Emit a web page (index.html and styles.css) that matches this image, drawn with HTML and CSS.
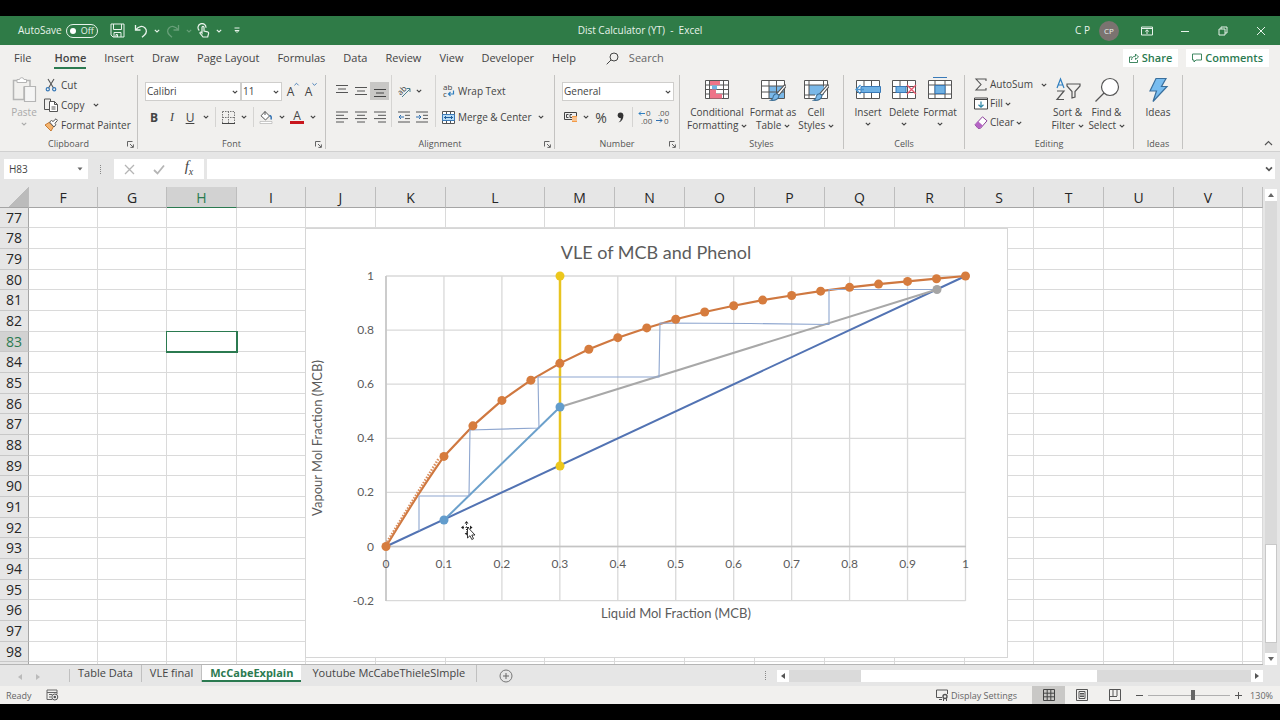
FILE: index.html
```html
<!DOCTYPE html>
<html lang="en">
<head>
  <title>Dist Calculator (YT) - Excel</title>
  <meta charset="utf-8">
  <meta name="viewport" content="width=device-width, initial-scale=1">
  <link rel="stylesheet" href="styles.css">
</head>
<body>
  <svg class="sprite" aria-hidden="true">
    <symbol id="chevron" viewBox="0 0 6 6"><path d="M.8 1.8 3 4 5.2 1.8" fill="none" stroke="currentColor" stroke-width="1.1"/></symbol>
    <symbol id="launcher" viewBox="0 0 7 7"><path d="M.5 5.5v-5h5M3 3l3 3M6.4 3.4v3h-3" fill="none" stroke="currentColor" stroke-width=".9"/></symbol>
    <symbol id="brush" viewBox="0 0 16 16"><path d="M14.5.8c.8.5.8 1.2.2 2L8.8 10 7 8.5 13 1.6c.5-.6 1-.9 1.5-.8z" fill="#fff" stroke="#555" stroke-width=".9"/><path d="M6.8 8.6 8.8 10c.2 3-2.600 5-7.300 4.500 2.300-1 1.800-2.300 2.500-4 .6-1.300 1.600-1.900 2.800-1.900z" fill="#7ab8e8" stroke="#3f6f94" stroke-width=".9"/></symbol>
  </svg>

  <div class="app">
    <header class="titlebar">
      <label class="autosave">AutoSave
        <input type="checkbox" role="switch">
        <span class="toggle">Off</span>
      </label>
      <div class="quick">
        <button aria-label="Save"><svg width="15" height="15" viewBox="0 0 15 15"><path d="M1 1h13v13H3l-2-2zM3.500 1v5.500h8V1M4 14V9.500h7V14M6 14v-2.500h1.500V14" fill="none" stroke="currentColor"/></svg></button>
        <button aria-label="Undo"><svg width="14" height="14" viewBox="0 0 14 14"><path d="M1.500 1v5h5M1.700 6C4.500 2 8.500 1.600 10.800 3.800s2 5-.3 7.200L8 13.300" fill="none" stroke="currentColor" stroke-width="1.300"/></svg></button>
        <button class="more" aria-label="Undo list"><svg width="6" height="6"><use href="#chevron"/></svg></button>
        <button class="dim" aria-label="Redo"><svg width="14" height="14" viewBox="0 0 14 14"><path d="M12.500 1v5h-5M12.300 6C9.500 2 5.500 1.600 3.200 3.800s-2 5 .3 7.200L6 13.300" fill="none" stroke="currentColor" stroke-width="1.300"/></svg></button>
        <button class="more dim" aria-label="Redo list"><svg width="6" height="6"><use href="#chevron"/></svg></button>
        <button class="touch" aria-label="Touch mode"><svg width="13" height="15" viewBox="0 0 13 15"><path d="M2.300 7.500A4 4 0 1 1 9 4.800M5 10V4.500c0-1.500 2-1.500 2 0V8l3.500.8c1 .3 1.300 1 1 2l-.8 3.200H6l-3-3.800c-.3-1 .8-1.500 1.500-.8z" fill="none" stroke="currentColor" stroke-width="1.200"/></svg></button>
        <button class="more" aria-label="Touch list"><svg width="6" height="6"><use href="#chevron"/></svg></button>
        <button class="more last" aria-label="Customize toolbar"><svg width="6" height="7" viewBox="0 0 6 7"><path d="M.5 1h5M1 3.500l2 2 2-2z" fill="none" stroke="currentColor"/></svg></button>
      </div>
      <div class="doc-title">Dist Calculator (YT)&nbsp; -&nbsp; Excel</div>
      <div class="window-side">
        <span>C P</span>
        <button class="avatar" aria-label="Account">CP</button>
        <button class="win" aria-label="Ribbon display"><svg width="12" height="10" viewBox="0 0 12 10"><path d="M.5 1h11v8H.5zM.5 2.500h11M6 8V4M4.200 5.500 6 3.800l1.800 1.700" fill="none" stroke="currentColor"/></svg></button>
        <button class="win" aria-label="Minimize"><svg width="10" height="10" viewBox="0 0 10 10"><path d="M1 5.500h8" stroke="currentColor"/></svg></button>
        <button class="win" aria-label="Restore"><svg width="10" height="10" viewBox="0 0 10 10"><path d="M1 3h6v6H1zM3 3V1h6v6H7" fill="none" stroke="currentColor"/></svg></button>
        <button class="win" aria-label="Close"><svg width="10" height="10" viewBox="0 0 10 10"><path d="m1 1 8 8M9 1 1 9" stroke="currentColor"/></svg></button>
      </div>
    </header>

    <nav class="tabs">
      <a href="#">File</a>
      <a href="#" class="current">Home</a>
      <a href="#">Insert</a>
      <a href="#">Draw</a>
      <a href="#">Page Layout</a>
      <a href="#">Formulas</a>
      <a href="#">Data</a>
      <a href="#">Review</a>
      <a href="#">View</a>
      <a href="#">Developer</a>
      <a href="#">Help</a>
      <label class="search">
        <svg width="13" height="13" viewBox="0 0 13 13"><circle cx="8" cy="5" r="4" fill="none" stroke="currentColor"/><path d="M5 8 .7 12.300" stroke="currentColor"/></svg>
        <input type="text" placeholder="Search" aria-label="Search">
      </label>
      <button class="share"><svg width="10" height="10" viewBox="0 0 10 10"><path d="M3 4H.5v5.500h8V7M2.500 7c.3-2.500 1.500-3.700 4-3.800V1L9.500 4 6.500 6.500V4.800" fill="none" stroke="currentColor" stroke-width=".9"/></svg>Share</button>
      <button class="share"><svg width="10" height="10" viewBox="0 0 10 10"><path d="M.5 1h9v6H4L2 9V7H.5z" fill="none" stroke="currentColor" stroke-width=".9"/></svg>Comments</button>
    </nav>

    <div class="ribbon">
      <section class="group clipboard">
        <div class="group-body">
          <button class="big paste" disabled>
            <svg width="25" height="26" viewBox="0 0 25 26"><path d="M5 3.500H1.500v19H12M12 22.500v-13M18 9V3.500h-3.500" fill="none" stroke="#b5b5b5" stroke-width="1.500"/><path d="M5 5.500v-3h2.500a2.300 2.300 0 0 1 4.500 0h2.500v3z" fill="#fff" stroke="#b5b5b5"/><path d="M12.500 9.500h11v15h-11z" fill="#f5f5f5" stroke="#b5b5b5" stroke-width="1.200"/></svg>
            Paste
            <svg width="6" height="6"><use href="#chevron"/></svg>
          </button>
          <div class="list">
            <button><svg width="14" height="14" viewBox="0 0 14 14"><path d="m4 1 5.500 9M10 1 4.500 10" stroke="#555" stroke-width="1.100"/><g fill="none" stroke="#3a7ab8" stroke-width="1.200"><circle cx="3.800" cy="11.200" r="1.600"/><circle cx="10.200" cy="11.200" r="1.600"/></g></svg>Cut</button>
            <button><svg width="14" height="14" viewBox="0 0 14 14"><path d="M5 11.500H.5V1h6v2" fill="none" stroke="#555"/><path d="M5.500 3.500h5l3 3v7h-8zM10.500 3.500v3h3M7.500 9h4M7.500 11h4" fill="#fff" stroke="#555"/></svg>Copy <svg class="gap" width="6" height="6"><use href="#chevron"/></svg></button>
            <button><svg width="14" height="14" viewBox="0 0 14 14"><path d="m1 7 4-2.500 4.500 4L7 13z" fill="#f5b570" stroke="#c77b33"/><path d="m5.500 4 2-1.500 1.500 1L12 .8l1.500 1.500-2.500 3 .8 1.500L10 9z" fill="#fff" stroke="#555"/></svg>Format Painter</button>
          </div>
        </div>
        <footer>Clipboard<button class="launch" aria-label="Clipboard options"><svg width="7" height="7"><use href="#launcher"/></svg></button></footer>
      </section>

      <section class="group font">
        <div class="group-body rows">
          <div class="row">
            <span class="combo font-name"><select aria-label="Font"><option>Calibri</option></select><svg width="6" height="6"><use href="#chevron"/></svg></span>
            <span class="combo font-size"><select aria-label="Font size"><option>11</option></select><svg width="6" height="6"><use href="#chevron"/></svg></span>
            <button class="tool grow" aria-label="Increase font size">A<svg width="5" height="5" viewBox="0 0 6 6"><path d="M.5 4 3 1.500 5.500 4" fill="none" stroke="#2f6fb0"/></svg></button>
            <button class="tool grow" aria-label="Decrease font size">A<svg width="5" height="5" viewBox="0 0 6 6"><path d="M.5 1.500 3 4l2.500-2.500" fill="none" stroke="#2f6fb0"/></svg></button>
          </div>
          <div class="row">
            <button class="tool bold">B</button>
            <button class="tool italic">I</button>
            <button class="tool underline">U</button>
            <button class="drop" aria-label="Underline styles"><svg width="6" height="6"><use href="#chevron"/></svg></button>
            <i class="sep"></i>
            <button class="tool" aria-label="Borders"><svg width="13" height="13" viewBox="0 0 13 13"><path d="M.5.5h12v12M.5.5v12M6.500.5v12M.5 6.500h12" fill="none" stroke="#777" stroke-dasharray="1.500 1"/><path d="M0 12.500h13" stroke="#444"/></svg></button>
            <button class="drop" aria-label="Border styles"><svg width="6" height="6"><use href="#chevron"/></svg></button>
            <i class="sep"></i>
            <button class="tool" aria-label="Fill colour"><svg width="14" height="14" viewBox="0 0 14 14"><path d="m6 1.500 4.500 4.500-4 4L2 5.800zM6 1.500V5" fill="#fff" stroke="#555"/><path d="M10.500 5.500c2 .5 2 2 1.500 4" fill="none" stroke="#2f6fb0" stroke-width="1.500"/><path d="M1 11.500h12v2H1z" fill="#fff" stroke="#aaa" stroke-width=".6"/></svg></button>
            <button class="drop" aria-label="Fill colours"><svg width="6" height="6"><use href="#chevron"/></svg></button>
            <button class="tool font-color">A</button>
            <button class="drop" aria-label="Font colours"><svg width="6" height="6"><use href="#chevron"/></svg></button>
          </div>
        </div>
        <footer>Font<button class="launch" aria-label="Font options"><svg width="7" height="7"><use href="#launcher"/></svg></button></footer>
      </section>

      <section class="group alignment">
        <div class="group-body">
          <div class="align-grid">
            <button class="tool" aria-label="Top align"><svg width="12" height="12" viewBox="0 0 12 12"><path d="M0 .5h12M2 4h8M0 7.500h12" stroke="#555"/></svg></button>
            <button class="tool" aria-label="Middle align"><svg width="12" height="12" viewBox="0 0 12 12"><path d="M0 2.500h12M2 6h8M0 9.500h12" stroke="#555"/></svg></button>
            <button class="tool pressed" aria-label="Bottom align"><svg width="12" height="12" viewBox="0 0 12 12"><path d="M0 4.500h12M2 8h8M0 11.500h12" stroke="#444"/></svg></button>
            <button class="tool" aria-label="Align left"><svg width="12" height="12" viewBox="0 0 12 12"><path d="M0 1h12M0 4.300h8M0 7.600h12M0 11h8" stroke="#555"/></svg></button>
            <button class="tool" aria-label="Center"><svg width="12" height="12" viewBox="0 0 12 12"><path d="M0 1h12M2 4.300h8M0 7.600h12M2 11h8" stroke="#555"/></svg></button>
            <button class="tool" aria-label="Align right"><svg width="12" height="12" viewBox="0 0 12 12"><path d="M0 1h12M4 4.300h8M0 7.600h12M4 11h8" stroke="#555"/></svg></button>
          </div>
          <div class="indent">
            <div class="row">
              <button class="tool" aria-label="Orientation"><svg width="15" height="14" viewBox="0 0 15 14"><text x="0" y="9" transform="rotate(-45 5 6)" font-size="8" fill="#444">ab</text><path d="m5 13 8-8M9.500 4.500H13V8" fill="none" stroke="#4a7f8f"/></svg></button>
              <button class="drop" aria-label="Orientation list"><svg width="6" height="6"><use href="#chevron"/></svg></button>
            </div>
            <div class="row">
              <button class="tool" aria-label="Decrease indent"><svg width="12" height="12" viewBox="0 0 12 12"><path d="M0 1h12M7 4.300h5M7 7.600h5M0 11h12" stroke="#555"/><path d="M6 6H1M3 4 1 6l2 2" fill="none" stroke="#2f6fb0"/></svg></button>
              <button class="tool" aria-label="Increase indent"><svg width="12" height="12" viewBox="0 0 12 12"><path d="M0 1h12M7 4.300h5M7 7.600h5M0 11h12" stroke="#555"/><path d="M0 6h5M3 4l2 2-2 2" fill="none" stroke="#2f6fb0"/></svg></button>
            </div>
          </div>
          <div class="wrap">
            <button class="text-tool"><svg width="13" height="14" viewBox="0 0 13 14"><text x="1" y="6" font-size="8" fill="#444">ab</text><text x="1" y="13" font-size="8" fill="#444">c</text><path d="M11.500 6.500v3.500H6.500M8.500 8l-2 2 2 2" fill="none" stroke="#2f7fc0" stroke-width="1.200"/></svg>Wrap Text</button>
            <button class="text-tool"><svg width="13" height="13" viewBox="0 0 13 13"><path d="M.5.5h12v12H.5z" fill="#fff" stroke="#555"/><path d="M4.500.5v3M8.500.5v3M4.500 9.500v3M8.500 9.500v3" stroke="#555"/><path d="M.5 3.500h12v6H.5z" fill="#b9dcf5" stroke="#3a7ab8"/><path d="M2 6.500h9M4 5 2.500 6.500 4 8M9 5l1.500 1.500L9 8" fill="none" stroke="#1f5f9f"/></svg>Merge &amp; Center <svg class="gap" width="6" height="6"><use href="#chevron"/></svg></button>
          </div>
        </div>
        <footer>Alignment<button class="launch" aria-label="Alignment options"><svg width="7" height="7"><use href="#launcher"/></svg></button></footer>
      </section>

      <section class="group number">
        <div class="group-body rows">
          <div class="row">
            <span class="combo format"><select aria-label="Number format"><option>General</option></select><svg width="6" height="6"><use href="#chevron"/></svg></span>
          </div>
          <div class="row">
            <button class="tool" aria-label="Accounting format"><svg width="14" height="12" viewBox="0 0 14 12"><path d="M.5 1.500h12v7H.5z" fill="#eee" stroke="#444"/><path d="M4.500 3.500H2.500v3h2M8 3.500H6v3h2" fill="none" stroke="#444"/><path d="M8 5h5v6H8z" fill="#f39b48"/><path d="M8 7h5M8 9h5" stroke="#fff" stroke-width=".8"/></svg></button>
            <button class="drop" aria-label="Accounting formats"><svg width="6" height="6"><use href="#chevron"/></svg></button>
            <button class="tool percent">%</button>
            <button class="tool comma" aria-label="Comma style"><svg width="7" height="11" viewBox="0 0 7 11"><circle cx="3.500" cy="3.300" r="2.800" fill="#333"/><path d="M6.300 3.300C6.500 7 5 9.500 1.500 10.500c2-1.500 2.700-3 2-5.500z" fill="#333"/></svg></button>
            <i class="sep"></i>
            <button class="tool" aria-label="Increase decimal"><svg width="14" height="14" viewBox="0 0 14 14"><text x="8" y="6" font-size="8" fill="#555">0</text><text x="3" y="14" font-size="8" fill="#555">.00</text><path d="M7 3.500H1M3 1.500l-2 2 2 2" fill="none" stroke="#2f7fc0"/></svg></button>
            <button class="tool" aria-label="Decrease decimal"><svg width="14" height="14" viewBox="0 0 14 14"><text x="2" y="6" font-size="8" fill="#555">.00</text><text x="8" y="14" font-size="8" fill="#555">0</text><path d="M0 10.500h6M4 8.500l2 2-2 2" fill="none" stroke="#2f6fb0"/></svg></button>
          </div>
        </div>
        <footer>Number<button class="launch" aria-label="Number options"><svg width="7" height="7"><use href="#launcher"/></svg></button></footer>
      </section>

      <section class="group styles">
        <div class="group-body">
          <button class="big wide"><svg width="26" height="26" viewBox="0 0 26 26"><path d="M1.500 3.500h23v18h-23zM1.500 8h23M1.500 12.500h23M1.500 17h23M5.500 3.500v18M19.500 3.500v18" fill="#fff" stroke="#555"/><path d="M6 4h10v4H6zM6 17h12v4.500H6z" fill="#ee7489"/><path d="M8 8.500h5v4H8z" fill="#6fb1e4"/><path d="M6 12.500h6V17H6z" fill="#ee7489"/></svg>Conditional<span>Formatting <svg width="6" height="6"><use href="#chevron"/></svg></span></button>
          <button class="big"><svg width="26" height="26" viewBox="0 0 26 26"><path d="M1.500 3.500h23v18h-23z" fill="#fff"/><path d="M9 9h15v12H9z" fill="#7ab8e8"/><path d="M1.500 3.500h23v18h-23zM1.500 9h23M1.500 15h23M9 3.500v18M16.500 3.500v18" fill="none" stroke="#555"/><use href="#brush" x="9" y="7" width="18" height="18"/></svg>Format as<span>Table <svg width="6" height="6"><use href="#chevron"/></svg></span></button>
          <button class="big narrow"><svg width="26" height="26" viewBox="0 0 26 26"><path d="M1.500 3.500h23v18h-23z" fill="#fff"/><path d="M6 8h15v10H6z" fill="#7ab8e8"/><path d="M1.500 3.500h23v18h-23zM1.500 8h23M6 3.500v18M1.500 18H12M20.500 3.500v6" fill="none" stroke="#555"/><use href="#brush" x="9" y="7" width="18" height="18"/></svg>Cell<span>Styles <svg width="6" height="6"><use href="#chevron"/></svg></span></button>
        </div>
        <footer>Styles</footer>
      </section>

      <section class="group cells">
        <div class="group-body">
          <button class="big"><svg width="26" height="26" viewBox="0 0 26 26"><path d="M1.500 3.500h23v18h-23zM1.500 15.500h23M9 3.500v18M16.500 3.500v18" fill="#fff" stroke="#555"/><path d="M6 9.500h19.500v6H6z" fill="#6fb1e4" stroke="#3a7ab8"/><path d="M9 12.500H1M5.500 8 1 12.500 5.500 17" fill="none" stroke="#4a94d0" stroke-width="1.300"/></svg>Insert<svg width="6" height="6"><use href="#chevron"/></svg></button>
          <button class="big"><svg width="26" height="26" viewBox="0 0 26 26"><path d="M1.500 3.500h23v18h-23zM1.500 9.500h23M1.500 15.500h23M9 3.500v18M16.500 3.500v18" fill="#fff" stroke="#555"/><path d="M5 9.500h10v6H5z" fill="#6fb1e4" stroke="#3a7ab8"/><path d="m16 8 9 9M25 8l-9 9" stroke="#e8566c" stroke-width="1.300"/></svg>Delete<svg width="6" height="6"><use href="#chevron"/></svg></button>
          <button class="big"><svg width="26" height="26" viewBox="0 0 26 26"><path d="M1.500 3.500h23v18h-23zM1.500 8h23M1.500 17h23M8 3.500v18M18 3.500v18" fill="#fff" stroke="#555"/><path d="M8 8.500h10v8H8z" fill="#6fb1e4" stroke="#3a7ab8"/><path d="M6 .5h14" stroke="#3a7ab8"/></svg>Format<svg width="6" height="6"><use href="#chevron"/></svg></button>
        </div>
        <footer>Cells</footer>
      </section>

      <section class="group editing">
        <div class="group-body">
          <div class="list">
            <button><svg width="14" height="13" viewBox="0 0 14 13"><path d="M12 3V1H2l5 5.500L2 12h10v-2" fill="none" stroke="#555" stroke-width="1.100"/></svg>AutoSum <svg class="gap" width="6" height="6"><use href="#chevron"/></svg></button>
            <button><svg width="14" height="13" viewBox="0 0 14 13"><path d="M.5 1h13v11H.5z" fill="#fff" stroke="#444"/><path d="M.5 2.500h13" stroke="#444"/><path d="M7 4.500V10M4.500 7.800 7 10.200l2.500-2.400" fill="none" stroke="#2c85a5" stroke-width="1.200"/></svg>Fill <svg width="6" height="6"><use href="#chevron"/></svg></button>
            <button><svg width="14" height="13" viewBox="0 0 14 13"><path d="m8.500.8 4.500 4-6.500 7.500H4L1 8.800z" fill="#fff" stroke="#8a3f98"/><path d="M4 5.300 8.800 9.500 6.300 12H4L1 8.800z" fill="#b565c4"/></svg>Clear <svg width="6" height="6"><use href="#chevron"/></svg></button>
          </div>
          <button class="big"><svg width="26" height="26" viewBox="0 0 26 26"><path d="m2 11 3.500-9L9 11M3.300 8h4.400" fill="none" stroke="#2f7fc0" stroke-width="1.200"/><path d="M2 14h7l-7 8.500h7M12 7h13v2l-5 5.500V20l-3 1v-6.500L12 9z" fill="none" stroke="#555" stroke-width="1.200"/></svg>Sort &amp;<span>Filter <svg width="6" height="6"><use href="#chevron"/></svg></span></button>
          <button class="big"><svg width="26" height="26" viewBox="0 0 26 26"><circle cx="16" cy="10" r="8.500" fill="#fff" stroke="#555" stroke-width="1.200"/><path d="m10 16-8.500 8.500" stroke="#555" stroke-width="1.300"/></svg>Find &amp;<span>Select <svg width="6" height="6"><use href="#chevron"/></svg></span></button>
        </div>
        <footer>Editing</footer>
      </section>

      <section class="group ideas">
        <div class="group-body">
          <button class="big"><svg width="26" height="26" viewBox="0 0 26 26"><path d="M11 1.500h10l-4.500 8h5.500L8 24.500 11.500 14H5z" fill="#78bdf0" stroke="#3a6f9c" stroke-width="1.200"/></svg>Ideas</button>
        </div>
        <footer>Ideas</footer>
      </section>
      <button class="collapse" aria-label="Collapse ribbon"><svg width="9" height="6" viewBox="0 0 9 6"><path d="m1 5 3.500-3.500L8 5" fill="none" stroke="#555" stroke-width="1.200"/></svg></button>
    </div>

    <div class="formula-bar">
      <span class="name-box"><input type="text" value="H83" aria-label="Name box"><svg width="6" height="4" viewBox="0 0 6 4"><path d="M.5.5h5L3 3.500z" fill="#666"/></svg></span>
      <span class="dots"></span>
      <div class="entry">
        <button aria-label="Cancel"><svg width="11" height="11" viewBox="0 0 11 11"><path d="m1 1 9 9M10 1l-9 9" stroke="#b5b5b5" stroke-width="1.300"/></svg></button>
        <button aria-label="Enter"><svg width="12" height="11" viewBox="0 0 12 11"><path d="m1 6 3.500 3.500L11 1.500" fill="none" stroke="#b5b5b5" stroke-width="1.800"/></svg></button>
        <button class="fx"><i>f</i><sub>x</sub></button>
      </div>
      <div class="formula">
        <input type="text" aria-label="Formula">
        <svg width="8" height="8" viewBox="0 0 6 6"><path d="M.8 1.800 3 4l2.200-2.200" fill="none" stroke="#555" stroke-width="1.300"/></svg>
      </div>
    </div>

    <main class="sheet">
      <div class="grid">
        <table>
          <colgroup id="cols"></colgroup>
          <thead><tr id="head"></tr></thead>
          <tbody id="cells"></tbody>
        </table>

        <svg class="chart" viewBox="0 0 703 430" role="img" aria-label="VLE of MCB and Phenol">
          <rect x=".5" y=".5" width="702" height="429" fill="#fff" stroke="#d6d6d6"/>
          <text class="chart-title" x="351" y="31">VLE of MCB and Phenol</text>
          <path id="gridlines" stroke="#d9d9d9" stroke-width="1.300"/>
          <path d="M81 318.500h580M81 48v325" stroke="#c4c4c4" stroke-width="1.500"/>
          <g id="labels"></g>
          <text class="axis-title" x="371" y="390">Liquid Mol Fraction (MCB)</text>
          <text class="axis-title" transform="translate(17 210) rotate(-90)">Vapour Mol Fraction (MCB)</text>
          <path d="M81 318.500 660.500 48" stroke="#5273b3" stroke-width="2"/>
          <path d="M255 179 632 61.500" stroke="#a8a8a8" stroke-width="2"/>
          <path d="m139 292 116-113" stroke="#6ba0cb" stroke-width="2"/>
          <path d="M255 48v190" stroke="#e8c420" stroke-width="2.500"/>
          <path id="curve" fill="none" stroke="#cf7840" stroke-width="2.200"/>
          <path d="M82 314 134 230" stroke="#d98d5c" stroke-width="2.500" stroke-dasharray="1.500 1.500"/>
          <path d="M114 303v-35h50l1-66 69-2-1-51h121l1-54 90 .5 79 1V61.500h107" fill="none" stroke="#8ea6cf" stroke-width="1.100"/>
          <g id="points" fill="#d67c3e"></g>
          <circle cx="632" cy="61.500" r="4.500" fill="#a5a5a5"/>
          <g fill="#629ccc"><circle cx="255" cy="179" r="4.500"/><circle cx="139" cy="292" r="4.500"/></g>
          <g fill="#ecc71c"><circle cx="255" cy="48" r="4.500"/><circle cx="255" cy="238" r="4.500"/></g>
          <!-- move pointer -->
          <g transform="translate(155 292)">
            <path d="M6.500 4v10M3 7.500h8" stroke="#222" stroke-dasharray="1 1.500"/>
            <path d="m6.500 1 2 2.500h-4zM1 7.500 3.500 5.500v4zM12.500 7.500 10 5.500v4zM6.500 15.500l-1.800-2.500h2.500z" fill="#222"/>
            <path d="M7.500 7v11l2.500-2.300 1.800 3.800 1.700-.8-1.700-3.700h3.200z" fill="#fff" stroke="#222" stroke-width=".9"/>
          </g>
        </svg>
      </div>
      <div class="scroll vertical">
        <button aria-label="Scroll up"><svg width="6" height="4" viewBox="0 0 6 4"><path d="M0 4h6L3 0z" fill="#666"/></svg></button>
        <div class="track"><div class="thumb"></div></div>
        <button aria-label="Scroll down"><svg width="6" height="4" viewBox="0 0 6 4"><path d="M0 0h6L3 4z" fill="#666"/></svg></button>
      </div>
    </main>

    <div class="sheet-tabs">
      <div class="sheet-nav">
        <button aria-label="Previous sheet"><svg width="4" height="6" viewBox="0 0 4 6"><path d="M4 0v6L0 3z" fill="#bbb"/></svg></button>
        <button aria-label="Next sheet"><svg width="4" height="6" viewBox="0 0 4 6"><path d="M0 0v6l4-3z" fill="#bbb"/></svg></button>
      </div>
      <a href="#">Table Data</a>
      <a href="#">VLE final</a>
      <a href="#" class="current">McCabeExplain</a>
      <a href="#">Youtube McCabeThieleSImple</a>
      <button class="add" aria-label="New sheet"><svg width="14" height="14" viewBox="0 0 14 14"><circle cx="7" cy="7" r="6" fill="none" stroke="#777"/><path d="M7 4v6M4 7h6" stroke="#666"/></svg></button>
      <span class="dots"></span>
      <div class="scroll horizontal">
        <button aria-label="Scroll left"><svg width="4" height="6" viewBox="0 0 4 6"><path d="M4 0v6L0 3z" fill="#555"/></svg></button>
        <div class="track"><div class="thumb"></div></div>
        <button aria-label="Scroll right"><svg width="4" height="6" viewBox="0 0 4 6"><path d="M0 0v6l4-3z" fill="#555"/></svg></button>
      </div>
    </div>

    <footer class="status">
      <span class="ready">Ready</span>
      <button aria-label="Record macro"><svg width="13" height="12" viewBox="0 0 13 12"><path d="M6 10.500H1V1h10v4M1 3.500h10M3 5.500h3M3 8h2" fill="none" stroke="#666"/><circle cx="8.800" cy="8" r="3" fill="#f1f1f1" stroke="#555"/><circle cx="8.800" cy="8" r="1.300" fill="#555"/></svg></button>
      <button class="display"><svg width="13" height="12" viewBox="0 0 13 12"><path d="M6 8.500H.5V1h11v4M3 10.500h3" fill="none" stroke="#555"/><circle cx="9" cy="7.500" r="2" fill="none" stroke="#555" stroke-width="1.400"/><path d="M7.500 9.500v2.500M10.500 9.500v2.500" stroke="#555"/></svg>Display Settings</button>
      <button class="view on" aria-label="Normal view"><svg width="12" height="12" viewBox="0 0 12 12"><path d="M.5.5h11v11H.5zM.5 4.200h11M.5 7.800h11M4.200.5v11M7.800.5v11" fill="none" stroke="#444"/></svg></button>
      <button class="view" aria-label="Page layout view"><svg width="12" height="12" viewBox="0 0 12 12"><path d="M.5.5h11v11H.5zM3 2.500h6v7H3zM4 4.500h4M4 6h4M4 7.500h4" fill="none" stroke="#555"/></svg></button>
      <button class="view" aria-label="Page break view"><svg width="12" height="12" viewBox="0 0 12 12"><path d="M.5.5h11v11H.5zM4 1v6M8 1v6M.5 7.500H8" fill="none" stroke="#555"/></svg></button>
      <button class="zoom" aria-label="Zoom out"><svg width="7" height="7" viewBox="0 0 7 7"><path d="M0 3.500h7" stroke="#555"/></svg></button>
      <input type="range" min="0" max="100" value="55" aria-label="Zoom">
      <button class="zoom" aria-label="Zoom in"><svg width="7" height="7" viewBox="0 0 7 7"><path d="M0 3.500h7M3.500 0v7" stroke="#555"/></svg></button>
      <span class="percent-label">130%</span>
    </footer>
  </div>

  <script>
    const widths = { F: 69, G: 69, H: 70, I: 69, J: 70, K: 70, L: 99, M: 70, N: 70, O: 70, P: 70, Q: 70, R: 70, S: 69, T: 70, U: 70, V: 69, '': 'auto' }
    const names = Object.keys(widths)
    const cols = document.getElementById('cols')
    const head = document.getElementById('head')
    const cells = document.getElementById('cells')

    cols.innerHTML = '<col class="row-col">' + names.map(n => `<col${n ? ` style="width: ${widths[n]}px"` : ''}>`).join('')
    head.innerHTML = '<td class="corner"></td>' + names.map(n => `<th${n === 'H' ? ' class="on"' : ''}>${n}</th>`).join('')

    for (let row = 77; row <= 99; row++) {
      const tds = names.map(n => n + row === 'H83' ? '<td class="selected"></td>' : '<td></td>').join('')
      cells.innerHTML += `<tr><th${row === 83 ? ' class="on"' : ''}>${row < 99 ? row : ''}</th>${tds}</tr>`
    }

    // chart scale, mol fraction to chart units
    const px = x => 81 + x * 579.5
    const py = y => 318.5 - y * 270.5
    const vapour = [0, 0.333, 0.446, 0.54, 0.615, 0.677, 0.729, 0.772, 0.808, 0.84, 0.867, 0.89, 0.911, 0.928, 0.944, 0.958, 0.97, 0.98, 0.99, 1]
    const points = vapour.map((y, i) => [px(i ? (i + 1) * 0.05 : 0), py(y)])

    let lines = ''
    let labels = ''
    for (let i = 0; i <= 10; i++) {
      lines += `M${px(i / 10)} 48V373`
      labels += `<text class="axis" x="${px(i / 10)}" y="340">${i / 10}</text>`
    }
    for (let i = -1; i <= 5; i++) {
      lines += `M81 ${py(i / 5)}H660.5`
      labels += `<text class="axis end" x="69" y="${py(i / 5) + 4}">${i / 5}</text>`
    }
    document.getElementById('gridlines').setAttribute('d', lines)
    document.getElementById('labels').innerHTML = labels
    document.getElementById('curve').setAttribute('d', 'M81 318.5Q112 267 ' + points.slice(1).map(p => p.join(' ')).join('L'))
    document.getElementById('points').innerHTML = points.map(p => `<circle cx="${p[0]}" cy="${p[1]}" r="4.5"/>`).join('')
  </script>
</body>
</html>
```
FILE: styles.css
```css
* {
  box-sizing: border-box;
  margin: 0;
}

body {
  height: 100vh;
  padding: 16px 0;
  background-color: #000000;
  color: #444444;
  font-family: "Open Sans", "Noto Sans", sans-serif;
  font-size: 10px;
  line-height: 13px;
}

button, input, select {
  padding: 0;
  border: 0;
  background: none;
  color: inherit;
  font: inherit;
}

a {
  color: inherit;
  text-decoration: none;
}

svg {
  flex: none;
}

.sprite {
  position: absolute;
  width: 0;
  height: 0;
}

.app {
  display: flex;
  flex-direction: column;
  height: 100%;
  background-color: #E6E6E6;
}

/* title bar */

.titlebar {
  display: grid;
  grid-template-columns: 1fr auto 1fr;
  grid-template-areas: "left title right";
  align-items: center;
  height: 29px;
  background-color: #2F7B47;
  color: #E8F3EB;
}

.titlebar button {
  display: flex;
  align-items: center;
  justify-content: center;
}

.autosave {
  display: flex;
  grid-area: left;
  gap: 4px;
  align-items: center;
  padding-left: 18px;
}

.autosave input {
  position: absolute;
  opacity: 0;
}

.toggle {
  display: flex;
  gap: 5px;
  align-items: center;
  height: 14px;
  padding: 0 3px;
  border: 1px solid #E8F3EB;
  border-radius: 7px;
  font-size: 9px;
}

.toggle::before {
  width: 6px;
  height: 6px;
  border-radius: 50%;
  background-color: #FFFFFF;
  content: "";
}

.quick {
  display: flex;
  grid-area: left;
  align-items: center;
  padding-left: 107px;
}

.quick button {
  width: 20px;
}

.quick .more {
  width: 12px;
}

.quick button:nth-child(2) {
  margin-left: 4px;
}

.quick .touch {
  margin-left: -2px;
}

.quick .last {
  margin-left: 6px;
}

.dim {
  opacity: 0.3;
}

.doc-title {
  grid-area: title;
}

.window-side {
  display: flex;
  grid-area: right;
  align-items: center;
  justify-content: flex-end;
}

.window-side .avatar {
  width: 20px;
  height: 20px;
  margin: 0 9px;
  border-radius: 50%;
  background-color: #7B7370;
  font-size: 8px;
}

.window-side .win {
  width: 38px;
}

/* ribbon tabs */

.tabs {
  display: flex;
  gap: 18px;
  align-items: center;
  height: 26px;
  padding: 0 11px 0 14px;
  background-color: #F1F0EE;
  font-size: 11px;
  line-height: 16px;
}

.tabs .current {
  margin-left: 5px;
  padding: 3px 0 1px;
  border-bottom: 2px solid #2B7A50;
  font-weight: 600;
}

.search {
  display: flex;
  flex: 1;
  gap: 10px;
  align-items: center;
  padding-left: 12px;
}

.search input {
  width: 80px;
}

.search input::placeholder {
  color: #666666;
  opacity: 1;
}

.share {
  display: flex;
  gap: 3px;
  align-items: center;
  height: 18px;
  margin-left: -10px;
  padding: 0 6px;
  background-color: #FFFFFF;
  color: #2B7A50;
  font-weight: 600;
}

/* ribbon */

.ribbon {
  display: flex;
  padding: 4px 0 2px;
  border-bottom: 1px solid #D0D0D0;
  background-color: #F1F0EE;
}

.group {
  display: flex;
  flex-direction: column;
  height: 74px;
  border-right: 1px solid #C4C3C1;
}

.group-body {
  display: flex;
  height: 64px;
}

.group footer {
  position: relative;
  color: #555555;
  font-size: 9px;
  line-height: 10px;
  text-align: center;
}

.launch {
  position: absolute;
  top: 2px;
  right: 3px;
  line-height: 0;
}

.clipboard { width: 138px; }
.font { width: 188px; }
.alignment { width: 229px; }
.number { width: 125px; }
.styles { width: 164px; }
.cells { width: 121px; }
.editing { width: 169px; }
.ideas { width: 49px; }

.big {
  display: flex;
  flex-direction: column;
  align-items: center;
  width: 50px;
  padding-top: 2px;
  white-space: nowrap;
}

.big > svg:first-child {
  margin-bottom: 3px;
}

.big > svg:last-child:not(:first-child) {
  margin-top: 2px;
}

.paste {
  width: 48px;
  color: #AAAAAA;
}

.styles .group-body,
.cells .group-body {
  padding-left: 6px;
}

.styles .wide {
  width: 62px;
}

.styles .narrow,
.cells .big {
  width: 36px;
}

.editing .big {
  width: 39px;
}

.ideas .big {
  width: 100%;
}

.list {
  display: flex;
  flex-direction: column;
  width: 89px;
}

.list button {
  display: flex;
  gap: 3px;
  align-items: center;
  height: 20px;
  white-space: nowrap;
}

.list .gap {
  margin-left: 6px;
}

.editing .list {
  width: 83px;
  padding-left: 9px;
}

.editing .list button {
  gap: 2px;
  height: 19px;
}

.clipboard .list {
  margin-left: -4px;
}

.rows {
  flex-direction: column;
  gap: 6px;
  padding: 6px 0 0 7px;
}

.row {
  display: flex;
  align-items: center;
  height: 20px;
}

.tool {
  display: flex;
  align-items: center;
  justify-content: center;
  width: 18px;
  height: 18px;
  font-size: 12px;
}

.tool svg,
.text-tool svg {
  overflow: visible;
}

.drop {
  display: flex;
  align-items: center;
  justify-content: center;
  width: 12px;
  height: 18px;
}

.font .drop {
  width: 13px;
}

.grow svg {
  align-self: flex-start;
}

.bold {
  font-weight: 700;
}

.italic {
  font-family: "Liberation Serif", serif;
  font-style: italic;
}

.underline {
  text-decoration: underline;
}

.font-color {
  width: 14px;
  height: 14px;
  margin: 0 2px;
  border-bottom: 3px solid #C8161D;
}

.percent {
  font-size: 14px;
}

.comma {
  margin-left: 1px;
}

.sep {
  width: 1px;
  height: 20px;
  margin: 0 3px;
  background-color: #D5D4D2;
}

.combo {
  position: relative;
  display: flex;
  height: 19px;
  border: 1px solid #CFCECC;
  background-color: #FFFFFF;
}

.combo select {
  width: 100%;
  padding-left: 1px;
  appearance: none;
}

.combo svg {
  position: absolute;
  top: 6px;
  right: 2px;
}

.font-name {
  width: 96px;
}

.font-size {
  width: 41px;
  margin-right: 2px;
}

.format {
  width: 112px;
}

.align-grid {
  display: grid;
  grid-template-columns: repeat(3, 19px);
  gap: 8px 0;
  align-content: start;
  padding: 7px 2px 0 6px;
}

.align-grid .tool {
  width: 19px;
}

.pressed {
  background-color: #C8C7C5;
}

.indent {
  display: flex;
  flex-direction: column;
  gap: 6px;
  width: 45px;
  height: 52px;
  padding: 6px 0 0 3px;
  border: solid #D5D4D2;
  border-width: 0 1px;
}

.wrap {
  display: flex;
  flex-direction: column;
  gap: 6px;
  padding: 6px 0 0 6px;
}

.text-tool {
  display: flex;
  gap: 3px;
  align-items: center;
  height: 20px;
  white-space: nowrap;
}

.text-tool .gap {
  margin-left: 3px;
}

.collapse {
  align-self: flex-end;
  margin: 0 7px 0 auto;
}

/* formula bar */

.formula-bar {
  display: flex;
  align-items: center;
  padding: 7px 5px 8px 4px;
}

.name-box,
.formula {
  display: flex;
  align-items: center;
  height: 20px;
  padding: 0 5px;
  background-color: #FFFFFF;
}

.name-box {
  width: 84px;
}

.name-box input {
  width: 68px;
}

.dots {
  width: 2px;
  height: 9px;
  border-left: 1px dotted #888888;
}

.formula-bar .dots {
  margin: 0 12px;
}

.entry {
  display: flex;
  height: 20px;
  margin-right: 3px;
  background-color: #FFFFFF;
}

.entry button {
  width: 30px;
  line-height: 0;
}

.entry .fx {
  font-family: "Liberation Serif", serif;
  font-size: 15px;
}

.fx sub {
  font-size: 10px;
  font-style: italic;
}

.formula {
  flex: 1;
  padding: 0 2px;
}

.formula input {
  flex: 1;
}

/* sheet */

.sheet {
  display: flex;
  flex: 1;
  min-height: 0;
}

.grid {
  position: relative;
  flex: 1;
  min-width: 0;
  overflow: hidden;
  border-bottom: 1px solid #B5B5B5;
}

table {
  width: 100%;
  border-collapse: separate;
  border-spacing: 0;
  table-layout: fixed;
  background-color: #FFFFFF;
}

.row-col {
  width: 29px;
}

th,
td {
  padding: 0;
  border-right: 1px solid #DADADA;
  border-bottom: 1px solid #DADADA;
}

th {
  background-color: #E6E6E6;
  color: #262626;
  font-size: 14px;
  font-weight: 400;
  line-height: 18px;
}

thead th,
.corner {
  height: 21px;
  padding-top: 2px;
  border-right-color: #BDBDBD;
  border-bottom-color: #A5A5A5;
}

.corner {
  background: linear-gradient(135deg, #E6E6E6 60%, #BBBBBB 60%);
}

tbody tr {
  height: 21px;
}

tbody tr:nth-child(3n + 1) {
  height: 20px;
}

tbody th {
  border-right-color: #A5A5A5;
  border-bottom-color: #C8C8C8;
}

th.on {
  background-color: #D2D2D2;
  color: #2B7A50;
}

thead .on {
  border-bottom-color: #2B7A50;
}

.selected {
  outline: 1px solid #2B7A50;
  border-color: #2B7A50;
}

.chart {
  position: absolute;
  top: 41px;
  left: 305px;
  width: 703px;
  height: 430px;
  font-family: "Lato", sans-serif;
}

.chart text {
  fill: #5C5C5C;
}

.chart .chart-title {
  font-size: 18px;
  text-anchor: middle;
}

.chart .axis {
  font-size: 12px;
  text-anchor: middle;
}

.chart .end {
  text-anchor: end;
}

.chart .axis-title {
  font-size: 13px;
  text-anchor: middle;
}

/* scroll bars */

.scroll {
  display: flex;
}

.scroll button {
  display: flex;
  align-items: center;
  justify-content: center;
  width: 12px;
  height: 12px;
  background-color: #FFFFFF;
}

.scroll .track {
  display: flex;
  flex: 1;
  background-color: #DADADA;
}

.thumb {
  background-color: #FFFFFF;
}

.vertical {
  flex-direction: column;
  padding: 2px 3px 0 2px;
}

.vertical .track {
  flex-direction: column;
  justify-content: flex-end;
  padding-bottom: 10px;
}

.vertical .thumb {
  height: 99px;
  border: 1px solid #C8C8C8;
}

.horizontal {
  width: 486px;
  margin: 0 17px 0 10px;
}

.horizontal .track {
  padding-left: 72px;
}

.horizontal .thumb {
  width: 236px;
}

/* sheet tabs */

.sheet-tabs {
  display: flex;
  align-items: center;
  height: 21px;
  font-size: 11px;
}

.sheet-nav {
  display: flex;
  gap: 14px;
  width: 70px;
  padding-left: 18px;
  border-right: 1px solid #C0C0C0;
}

.sheet-tabs a {
  height: 17px;
  padding: 0 8px;
  border-right: 1px solid #C0C0C0;
  line-height: 15px;
  align-self: flex-start;
}

.sheet-tabs .current {
  border-right: 0;
  border-bottom: 2px solid #2B7A50;
  background-color: #FFFFFF;
  color: #2B7A50;
  font-weight: 700;
}

.sheet-tabs .current + a {
  padding: 0 11px;
}

.add {
  height: 14px;
  margin: 0 auto 0 22px;
}

/* status bar */

.status {
  display: flex;
  align-items: center;
  height: 18px;
  padding: 0 7px 0 6px;
  background-color: #F1F0EE;
  color: #666666;
  font-size: 9px;
}

.status button {
  display: flex;
  gap: 2px;
  align-items: center;
  justify-content: center;
}

.ready {
  width: 40px;
}

.status .display {
  margin: 0 15px 0 auto;
}

.view {
  width: 33px;
  height: 18px;
}

.view.on {
  background-color: #C9C8C6;
}

.zoom {
  width: 17px;
}

.status input {
  width: 82px;
  height: 14px;
  appearance: none;
  background: linear-gradient(#B0B0B0, #B0B0B0) center / 100% 1px no-repeat;
}

.status input::-webkit-slider-thumb {
  width: 4px;
  height: 10px;
  appearance: none;
  background-color: #666666;
}

.percent-label {
  width: 26px;
  text-align: right;
}
```
